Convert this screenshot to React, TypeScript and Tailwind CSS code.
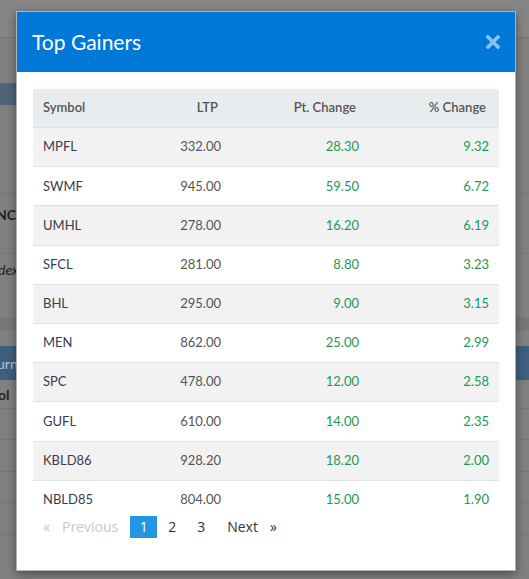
import React from "react";

// Top Gainers modal over a dimmed market page

const gainers = [
  ["MPFL", "332.00", "28.30", "9.32"],
  ["SWMF", "945.00", "59.50", "6.72"],
  ["UMHL", "278.00", "16.20", "6.19"],
  ["SFCL", "281.00", "8.80", "3.23"],
  ["BHL", "295.00", "9.00", "3.15"],
  ["MEN", "862.00", "25.00", "2.99"],
  ["SPC", "478.00", "12.00", "2.58"],
  ["GUFL", "610.00", "14.00", "2.35"],
  ["KBLD86", "928.20", "18.20", "2.00"],
  ["NBLD85", "804.00", "15.00", "1.90"],
];

function BackgroundPage() {
  return (
    <div className="min-h-[579px] w-full bg-[#808080] font-['Lato',sans-serif] text-[14px] text-[#222] overflow-hidden">
      <div className="h-[38px] bg-[#858585] border-b border-[#777]" />
      <div className="h-[45px]" />
      <div className="flex h-[22px]">
        <div className="w-[16px] bg-[#4f6379]" />
      </div>
      <div className="h-[88px]" />
      <div className="h-[60px] border-t border-[#777] flex items-start pt-[10px]">
        <span className="font-bold -ml-[4px]">NCI</span>
      </div>
      <div className="h-[65px] border-t border-[#777] pt-[5px]">
        <span className="italic -ml-[2px]">dex.</span>
      </div>
      <div className="h-[12px] bg-[#777]" />
      <div className="h-[16px]" />
      <div className="h-[34px] bg-[#3f5f7f] flex items-center">
        <span className="text-[#b5c3d2] -ml-[3px]">urn</span>
      </div>
      <div className="h-[29px] border-b border-[#777] flex items-center">
        <span className="font-bold -ml-[2px]">ol</span>
      </div>
      <div className="h-[31px] border-b border-[#777]" />
      <div className="h-[32px] border-b border-[#777]" />
      <div className="h-[31px] border-b border-[#777]" />
      <div className="h-[32px] border-b border-[#777]" />
    </div>
  );
}

function CloseIcon() {
  return (
    <svg width="14" height="14" viewBox="0 0 14 14" aria-hidden="true">
      <path d="M2 2 L12 12 M12 2 L2 12" stroke="#8cc3ee" strokeWidth="3.6" strokeLinecap="square" />
    </svg>
  );
}

function Pagination() {
  return (
    <div className="flex items-center h-[22px] mt-[-3px] font-['Open_Sans',sans-serif] text-[14px] leading-[22px]">
      <span className="ml-[10px] text-[#c8c8c8]">«</span>
      <span className="ml-[12px] text-[#c8c8c8]">Previous</span>
      <span className="ml-[12px] w-[27px] h-[22px] bg-[#2196e3] text-white text-center">1</span>
      <span className="ml-[11px] text-[#333]">2</span>
      <span className="ml-[21px] text-[#333]">3</span>
      <span className="ml-[22px] text-[#333]">Next</span>
      <span className="ml-[12px] text-[#333]">»</span>
    </div>
  );
}

function GainersTable() {
  return (
    <div className="w-[466px] font-['Lato',sans-serif] text-[13px]">
      <div className="grid grid-cols-[100px_98px_138px_130px] h-[38px] items-center bg-[#e9ecef] font-semibold text-[#555]">
        <div className="pl-[10px]">Symbol</div>
        <div className="text-right pr-[13px]">LTP</div>
        <div className="text-right pr-[13px]">Pt. Change</div>
        <div className="text-right pr-[13px]">% Change</div>
      </div>
      {gainers.map(([sym, ltp, pt, pct], i) => (
        <div
          key={sym}
          className={`grid grid-cols-[100px_98px_138px_130px] h-[39.2px] items-center border-t border-[#dee2e6] ${
            i % 2 === 0 ? "bg-[#f2f2f2]" : "bg-white"
          }`}
        >
          <div className="pl-[10px] text-[#3b3b4f]">{sym}</div>
          <div className="text-right pr-[10px] text-[#555]">{ltp}</div>
          <div className="text-right pr-[10px] text-[#1c9a52]">{pt}</div>
          <div className="text-right pr-[10px] text-[#1c9a52]">{pct}</div>
        </div>
      ))}
    </div>
  );
}

export default function App() {
  return (
    <div className="relative w-full min-h-[579px]">
      <BackgroundPage />

      {/* modal */}
      <div className="absolute top-[11px] left-[16px] w-[500px] bg-white border border-black/30 shadow-[0_3px_9px_rgba(0,0,0,0.4)]">
        <div className="h-[60px] bg-[#0078d7] flex items-center justify-between px-[15px]">
          <h4 className="font-['Lato',sans-serif] text-[21px] text-white">Top Gainers</h4>
          <CloseIcon />
        </div>
        <div className="px-[16px] pt-[17px] pb-[32px]">
          <GainersTable />
          <Pagination />
        </div>
      </div>
    </div>
  );
}
